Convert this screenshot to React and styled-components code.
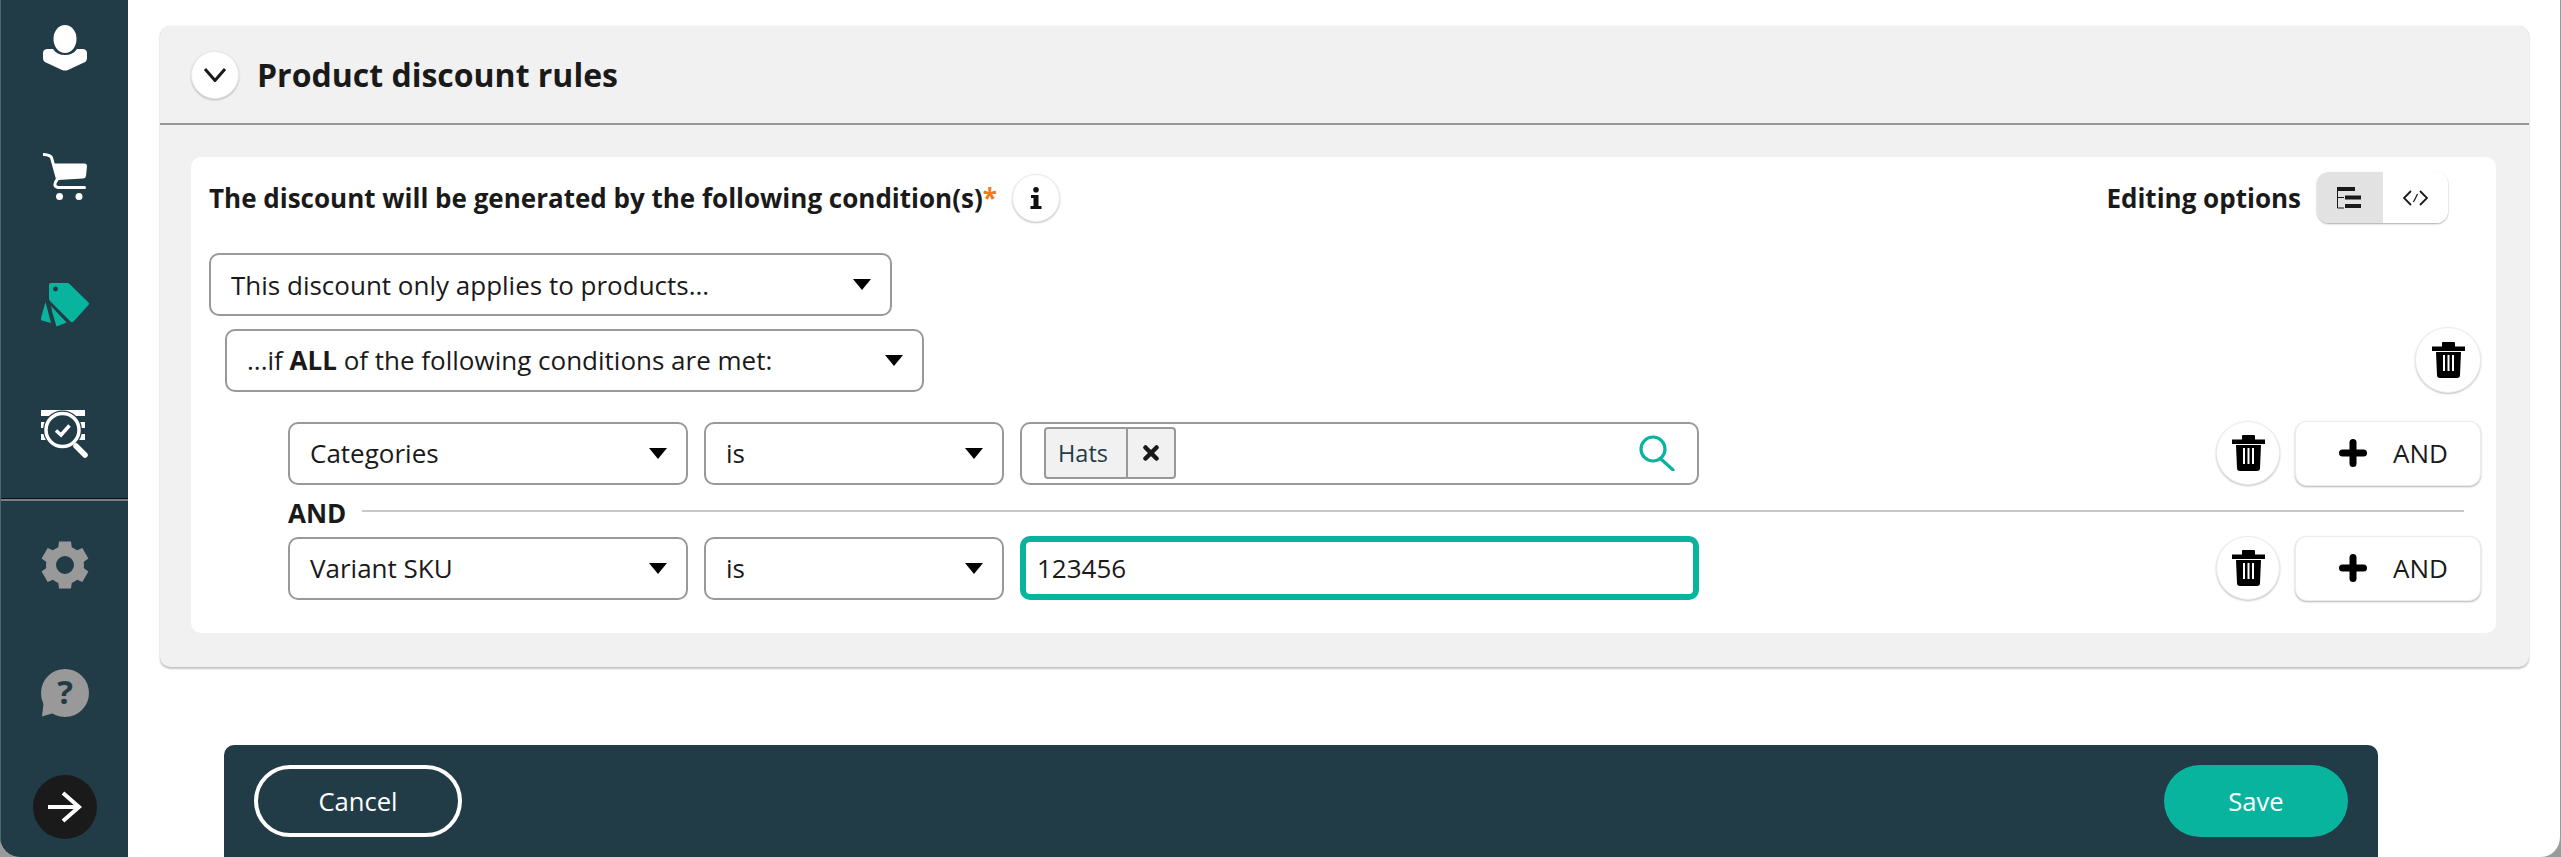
import React from 'react';
import styled, { createGlobalStyle } from 'styled-components';

const GlobalStyle = createGlobalStyle`
  html, body {
    margin: 0;
    padding: 0;
    background: #9a9a9a;
  }
  body {
    font-family: "Open Sans", "Liberation Sans", sans-serif;
    color: #1a1a1a;
  }
  * {
    box-sizing: border-box;
  }
`;

const DARK = '#213c46';
const TEAL = '#09b49f';
const LINE = '#999999';

const UserIcon = () => (
  <svg width="44" height="46" viewBox="0 0 44 46" fill="#fff">
    <ellipse cx="22" cy="14" rx="11.5" ry="14" />
    <path d="M0 28Q0 24 5 24L10 24Q14 30 22 30Q30 30 34 24L39 24Q44 24 44 28L44 33Q44 37 40 38L25 45Q22 46 19 45L4 38Q0 37 0 33Z" />
  </svg>
);

const CartIcon = () => (
  <svg width="44" height="47" viewBox="0 0 44 47" fill="#fff">
    <path d="M1 1.500Q7 2 8.500 4.500L14.500 26Q9 33 15 34.500L41.500 34.500" fill="none" stroke="#fff" strokeWidth="3" strokeLinecap="round" />
    <path d="M10 10.500L42 10.500Q44 10.500 44 13L43 23Q42.500 25.500 40 25.500L15 27Z" />
    <circle cx="16.500" cy="43.500" r="3.500" />
    <circle cx="36" cy="43.500" r="3.500" />
  </svg>
);

const TagsIcon = () => (
  <svg width="48" height="44" viewBox="0 0 48 44" fill={TEAL}>
    <path fillRule="evenodd" d="M10 0L26 0Q27.500 0 28.500 1L47.500 19.500Q48.500 21 47.500 22L32.500 38.500Q31 40 29.500 38.500L9 18Q8 17 8 15L8 2Q8 0 10 0ZM14.500 3.500A2.500 2.500 0 1 0 14.510 8.500A2.500 2.500 0 1 0 14.500 3.500Z" />
    <path d="M10 23L25.500 39.500L15.500 43.500L11.500 30Z" />
    <path d="M4.500 19L10 40L1 37.500Q-.5 37 0 35Z" />
  </svg>
);

const AuditIcon = () => (
  <svg width="48" height="48" viewBox="0 0 48 48">
    <rect x="0" y="0" width="44" height="6" fill="#fff" />
    <rect x="0" y="12" width="44" height="6" fill="#fff" />
    <rect x="0" y="24" width="44" height="6" fill="#fff" />
    <circle cx="21.500" cy="20" r="19.500" fill={DARK} />
    <circle cx="21.500" cy="20" r="16.500" fill={DARK} stroke="#fff" strokeWidth="3.500" />
    <path d="M15 20.500L20 25L28.500 15.500" fill="none" stroke="#fff" strokeWidth="3.500" />
    <path d="M35 36L44 45" stroke="#fff" strokeWidth="5.500" strokeLinecap="round" />
  </svg>
);

const GearIcon = () => (
  <svg width="48" height="48" viewBox="0 0 48 48" fill={LINE}>
    <circle cx="24" cy="24" r="14" fill="none" stroke={LINE} strokeWidth="10" />
    {[0, 60, 120, 180, 240, 300].map(angle => (
      <path key={angle} d="M18 0.500L30 0.500L31 8L17 8Z" transform={`rotate(${angle} 24 24)`} />
    ))}
  </svg>
);

const HelpIcon = () => (
  <svg width="48" height="48" viewBox="0 0 48 48" fill={LINE}>
    <circle cx="24" cy="24" r="24" />
    <path d="M3 30L1 47.500L16 43Z" />
    <text x="24" y="35" textAnchor="middle" fontSize="33" fontWeight="700" fontFamily="Open Sans" fill={DARK}>?</text>
  </svg>
);

const ArrowIcon = () => (
  <svg width="34" height="32" viewBox="0 0 34 32" fill="none" stroke="#fff" strokeWidth="4">
    <path d="M0 16L31 16" />
    <path d="M15 2L31 16L15 30" />
  </svg>
);

const ChevronIcon = () => (
  <svg width="24" height="14" viewBox="0 0 24 14" fill="none" stroke="#1a1a1a" strokeWidth="3">
    <path d="M2 1L12 12.500L22 1" />
  </svg>
);

const InfoIcon = () => (
  <svg width="12" height="22" viewBox="0 0 12 22" fill="#111">
    <circle cx="6" cy="2.800" r="2.800" />
    <path d="M1 8L8.500 8L8.500 19L11.500 19L11.500 22L.5 22L.5 19L3.500 19L3.500 11L1 11Z" />
  </svg>
);

const TreeIcon = () => (
  <svg width="25" height="22" viewBox="0 0 25 22">
    <rect x="0" y="0" width="18" height="4" fill="#1a1a1a" />
    <rect x="8" y="8.500" width="16" height="4" fill="#1a1a1a" />
    <rect x="8" y="17" width="16" height="4" fill="#1a1a1a" />
    <path d="M.5 4L.5 21L7 21M.5 10.500L7 10.500" fill="none" stroke="#1a1a1a" strokeWidth="1" />
  </svg>
);

const CodeIcon = () => (
  <svg width="25" height="16" viewBox="0 0 25 16" fill="none" stroke="#1a1a1a" strokeWidth="1.800">
    <path d="M8 1L1 8L8 15" />
    <path d="M17 1L24 8L17 15" />
    <path d="M14.500 4L10.500 12" strokeWidth="1.300" />
  </svg>
);

const TrashIcon = () => (
  <svg width="33" height="36" viewBox="0 0 33 36">
    <path d="M0 4.500L10 4.500L10 1Q10 0 11 0L22 0Q23 0 23 1L23 4.500L33 4.500L33 9L0 9Z" fill="#000" />
    <path fillRule="evenodd" d="M4 10L29 10L28 33Q28 36 25 36L8 36Q5 36 5 33ZM11 13L11 29L13 29L13 13ZM15.500 13L15.500 29L17.500 29L17.500 13ZM20 13L20 29L22 29L22 13Z" fill="#000" />
  </svg>
);

const PlusIcon = () => (
  <svg width="28" height="28" viewBox="0 0 28 28" fill="none" stroke="#000" strokeWidth="7" strokeLinecap="round">
    <path d="M14 3.500L14 24.500" />
    <path d="M3.500 14L24.500 14" />
  </svg>
);

const SearchIcon = () => (
  <svg width="36" height="36" viewBox="0 0 36 36" fill="none" stroke={TEAL} strokeWidth="3.200" strokeLinecap="round">
    <circle cx="14" cy="14" r="12" />
    <path d="M22 24L34 35" />
  </svg>
);

const CloseIcon = () => (
  <svg width="16" height="16" viewBox="0 0 16 16" fill="none" stroke="#1a1a1a" strokeWidth="4.500" strokeLinecap="round">
    <path d="M2.500 2.500L13.500 13.500" />
    <path d="M13.500 2.500L2.500 13.500" />
  </svg>
);

const CaretIcon = () => (
  <svg width="18" height="11" viewBox="0 0 18 11" fill="#000">
    <path d="M0 0L18 0L9 11Z" />
  </svg>
);

const Select = ({ width, children }) => (
  <SelectBox $width={width}>
    <span>{children}</span>
    <CaretIcon />
  </SelectBox>
);

const ConditionActions = () => (
  <Actions>
    <RoundButton $size={64}><TrashIcon /></RoundButton>
    <AddButton>
      <PlusIcon />
      <span>AND</span>
    </AddButton>
  </Actions>
);

const App = () => (
  <Shell>
    <GlobalStyle />
    <Sidebar>
      <NavGroup>
        <NavItem><UserIcon /></NavItem>
        <NavItem><CartIcon /></NavItem>
        <NavItem><TagsIcon /></NavItem>
        <NavItem><AuditIcon /></NavItem>
      </NavGroup>
      <NavDivider />
      <NavGroup $bottom>
        <NavItem><GearIcon /></NavItem>
        <NavItem><HelpIcon /></NavItem>
        <ExpandButton><ArrowIcon /></ExpandButton>
      </NavGroup>
    </Sidebar>
    <Main>
      <Card>
        <CardHeader>
          <RoundButton $size={48}><ChevronIcon /></RoundButton>
          <CardTitle>Product discount rules</CardTitle>
        </CardHeader>
        <CardBody>
          <Panel>
            <HeadRow>
              <Heading>The discount will be generated by the following condition(s)<Required>*</Required></Heading>
              <RoundButton $size={48}><InfoIcon /></RoundButton>
              <EditingLabel>Editing options</EditingLabel>
              <Toggle>
                <ToggleItem $active><TreeIcon /></ToggleItem>
                <ToggleItem><CodeIcon /></ToggleItem>
              </Toggle>
            </HeadRow>
            <ScopeRow>
              <Select width={683}>This discount only applies to products...</Select>
            </ScopeRow>
            <GroupRow>
              <Select width={699}>...if <b>ALL</b> of the following conditions are met:</Select>
              <RoundButton $size={66}><TrashIcon /></RoundButton>
            </GroupRow>
            <ConditionRow $first>
              <Select width={400}>Categories</Select>
              <Select width={300}>is</Select>
              <ValueBox>
                <Chip>
                  <ChipLabel>Hats</ChipLabel>
                  <ChipClose><CloseIcon /></ChipClose>
                </Chip>
                <SearchIcon />
              </ValueBox>
              <ConditionActions />
            </ConditionRow>
            <AndRow>
              <AndLabel>AND</AndLabel>
              <AndLine />
            </AndRow>
            <ConditionRow>
              <Select width={400}>Variant SKU</Select>
              <Select width={300}>is</Select>
              <ValueBox $focused>123456</ValueBox>
              <ConditionActions />
            </ConditionRow>
          </Panel>
        </CardBody>
      </Card>
      <Footer>
        <CancelButton>Cancel</CancelButton>
        <SaveButton>Save</SaveButton>
      </Footer>
    </Main>
  </Shell>
);

const Shell = styled.div`
  display: flex;
  width: 2561px;
  height: 857px;
  overflow: hidden;
  background: #ffffff;
  border-radius: 0 0 20px 20px;
  border-right: 1px solid #9a9a9a;
`;

const Sidebar = styled.aside`
  flex: 0 0 128px;
  display: flex;
  flex-direction: column;
  background: ${DARK};
  border-left: 1px solid #4f666e;
`;

const NavGroup = styled.div`
  display: flex;
  flex-direction: column;
  align-items: center;
  gap: ${props => (props.$bottom ? '80px' : '80.5px')};
  padding-top: ${props => (props.$bottom ? '40px' : '24px')};
  padding-bottom: ${props => (props.$bottom ? '0' : '40.5px')};
`;

const NavItem = styled.div`
  display: flex;
  align-items: center;
  justify-content: center;
  height: 48px;
`;

const NavDivider = styled.div`
  height: 3px;
  background: #777f83;
  border-top: 1px solid #111;
`;

const ExpandButton = styled.div`
  display: flex;
  align-items: center;
  justify-content: center;
  width: 64px;
  height: 64px;
  margin-top: -22px;
  border-radius: 50%;
  background: #1a1a1a;
`;

const Main = styled.main`
  flex: 1;
  min-width: 0;
  padding: 26px 31px 0 32px;
`;

const Card = styled.section`
  height: 641px;
  background: #f1f1f1;
  border-radius: 10px;
  box-shadow: 0 2px 2px rgba(0, 0, 0, 0.22), 0 0 1px rgba(0, 0, 0, 0.2);
`;

const CardHeader = styled.header`
  display: flex;
  align-items: center;
  gap: 18px;
  height: 99px;
  padding: 0 31px;
  border-bottom: 2px solid ${LINE};
`;

const CardTitle = styled.h2`
  margin: 0;
  font-size: 32px;
  font-weight: 700;
  color: #1a1a1a;
`;

const CardBody = styled.div`
  padding: 32px 33px 34px 31px;
`;

const Panel = styled.div`
  height: 476px;
  padding: 15px 15px 32px 18px;
  background: #ffffff;
  border-radius: 10px;
`;

const HeadRow = styled.div`
  display: flex;
  align-items: center;
  height: 51px;
  padding-right: 33px;
`;

const Heading = styled.div`
  font-size: 26px;
  font-weight: 700;
  white-space: nowrap;
  margin-right: 15px;
`;

const Required = styled.span`
  color: #f07a1c;
`;

const EditingLabel = styled.div`
  margin-left: auto;
  margin-right: 16px;
  font-size: 26px;
  font-weight: 700;
`;

const Toggle = styled.div`
  display: flex;
  width: 131px;
  height: 51px;
  overflow: hidden;
  border-radius: 12px;
  box-shadow: 0 1px 2px rgba(0, 0, 0, 0.35);
`;

const ToggleItem = styled.div`
  flex: 1;
  display: flex;
  align-items: center;
  justify-content: center;
  background: ${props => (props.$active ? '#e2e2e2' : '#ffffff')};
`;

const ScopeRow = styled.div`
  margin-top: 30px;
`;

const GroupRow = styled.div`
  display: flex;
  align-items: center;
  justify-content: space-between;
  height: 66px;
  margin-top: 11px;
  padding-left: 16px;
`;

const ConditionRow = styled.div`
  display: flex;
  align-items: center;
  gap: 16px;
  height: 66px;
  margin-top: ${props => (props.$first ? '27px' : '0')};
  padding-left: 79px;
`;

const SelectBox = styled.div`
  display: flex;
  align-items: center;
  justify-content: space-between;
  width: ${props => props.$width}px;
  height: 63px;
  padding: 0 19px 0 20px;
  background: #ffffff;
  border: 2px solid ${LINE};
  border-radius: 10px;
  font-size: 26px;
  white-space: nowrap;
`;

const ValueBox = styled.div`
  display: flex;
  align-items: center;
  justify-content: space-between;
  width: 679px;
  height: ${props => (props.$focused ? '64px' : '63px')};
  padding: ${props => (props.$focused ? '0 11px' : '0 22px')};
  background: #ffffff;
  border: ${props => (props.$focused ? `6px solid ${TEAL}` : `2px solid ${LINE}`)};
  border-radius: 10px;
  font-size: 26px;
`;

const Chip = styled.div`
  display: flex;
  align-items: stretch;
  width: 132px;
  height: 52px;
  background: #f1f1f1;
  border: 2px solid ${LINE};
  border-radius: 4px;
`;

const ChipLabel = styled.div`
  display: flex;
  align-items: center;
  width: 82px;
  padding-left: 12px;
  border-right: 2px solid ${LINE};
  font-size: 23.5px;
  color: ${DARK};
`;

const ChipClose = styled.div`
  flex: 1;
  display: flex;
  align-items: center;
  justify-content: center;
`;

const Actions = styled.div`
  display: flex;
  align-items: center;
  gap: 15px;
  margin-left: auto;
`;

const RoundButton = styled.div`
  flex: none;
  display: flex;
  align-items: center;
  justify-content: center;
  width: ${props => props.$size}px;
  height: ${props => props.$size}px;
  background: #ffffff;
  border: 1px solid #ececec;
  border-radius: 50%;
  box-shadow: 0 1px 2px rgba(0, 0, 0, 0.25);
`;

const AddButton = styled.div`
  display: flex;
  align-items: center;
  gap: 26px;
  width: 186px;
  height: 65px;
  padding-left: 43px;
  background: #ffffff;
  border: 1px solid #ececec;
  border-radius: 12px;
  box-shadow: 0 1px 2px rgba(0, 0, 0, 0.3);
  font-size: 26px;
`;

const AndRow = styled.div`
  display: flex;
  align-items: center;
  gap: 16px;
  height: 49px;
  padding-left: 79px;
  padding-right: 17px;
`;

const AndLabel = styled.div`
  font-size: 26px;
  font-weight: 700;
  position: relative;
  top: 2px;
`;

const AndLine = styled.div`
  flex: 1;
  height: 2px;
  background: #c8c8c8;
`;

const Footer = styled.footer`
  display: flex;
  align-items: center;
  justify-content: space-between;
  width: 2154px;
  height: 112px;
  margin: 78px 0 0 64px;
  padding: 0 30px;
  background: ${DARK};
  border-radius: 10px 10px 0 0;
`;

const CancelButton = styled.div`
  display: flex;
  align-items: center;
  justify-content: center;
  width: 208px;
  height: 72px;
  border: 4px solid #ffffff;
  border-radius: 36px;
  color: #ffffff;
  font-size: 25.6px;
`;

const SaveButton = styled.div`
  display: flex;
  align-items: center;
  justify-content: center;
  width: 184px;
  height: 72px;
  border-radius: 36px;
  background: ${TEAL};
  color: #ffffff;
  font-size: 25.6px;
`;

export default App;
